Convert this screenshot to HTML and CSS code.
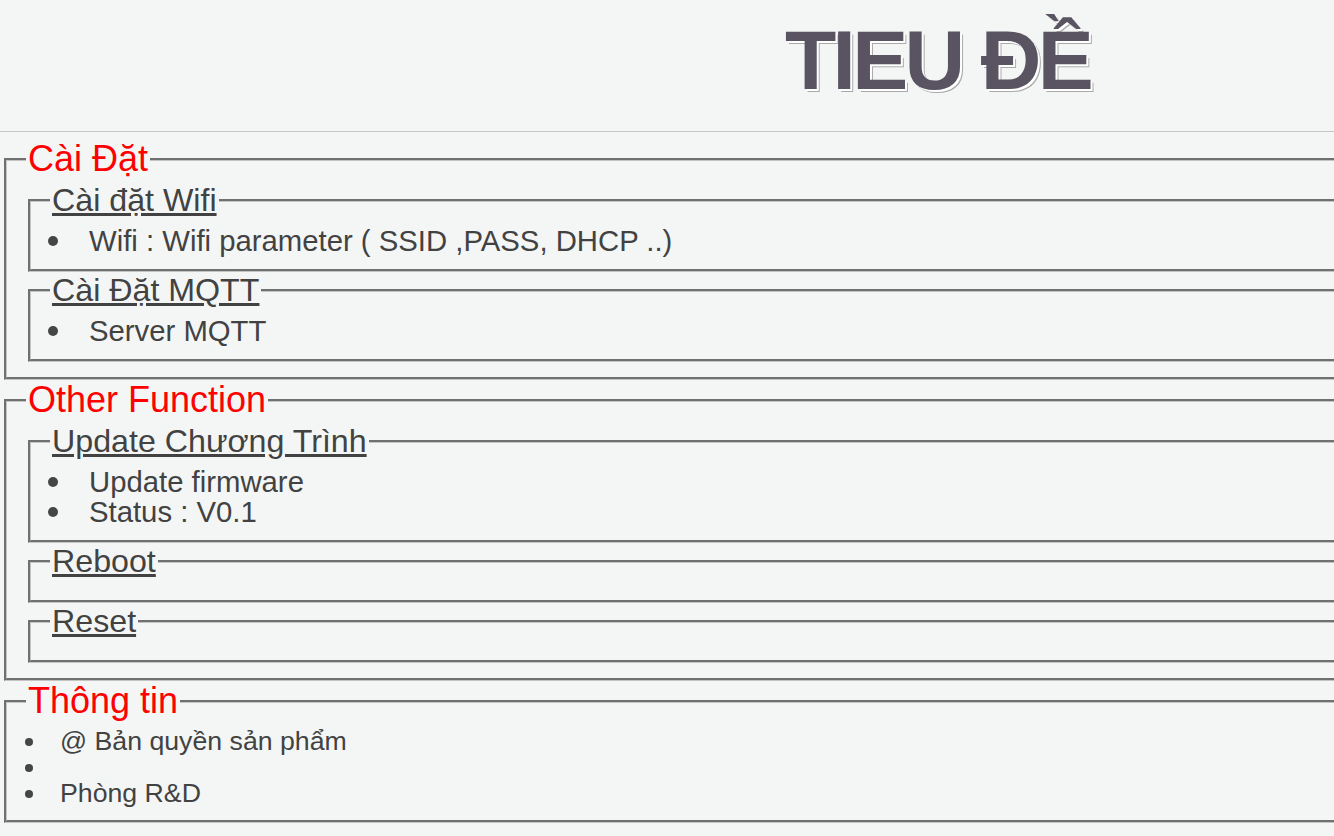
FILE: index.html
```html
<!DOCTYPE html>
<html lang="vi">
<head>
<meta charset="utf-8">
<title>TIEU ĐỀ</title>
<link rel="stylesheet" href="styles.css">
</head>
<body>
<div class="page">
  <h1 class="title">TIEU ĐỀ</h1>
  <div class="rule"></div>

  <fieldset class="group">
    <legend class="group-title">Cài Đặt</legend>
    <fieldset class="section">
      <legend class="section-title">Cài đặt Wifi</legend>
      <ul class="list">
        <li>Wifi : Wifi parameter ( SSID ,PASS, DHCP ..)</li>
      </ul>
    </fieldset>
    <fieldset class="section">
      <legend class="section-title">Cài Đặt MQTT</legend>
      <ul class="list">
        <li>Server MQTT</li>
      </ul>
    </fieldset>
  </fieldset>

  <fieldset class="group">
    <legend class="group-title">Other Function</legend>
    <fieldset class="section">
      <legend class="section-title">Update Chương Trình</legend>
      <ul class="list">
        <li>Update firmware</li>
        <li>Status : V0.1</li>
      </ul>
    </fieldset>
    <fieldset class="section empty">
      <legend class="section-title">Reboot</legend>
    </fieldset>
    <fieldset class="section empty">
      <legend class="section-title">Reset</legend>
    </fieldset>
  </fieldset>

  <fieldset class="group info">
    <legend class="group-title">Thông tin</legend>
    <ul class="info-list">
      <li>@ Bản quyền sản phẩm</li>
      <li></li>
      <li>Phòng R&amp;D</li>
    </ul>
  </fieldset>
</div>
</body>
</html>
```

FILE: styles.css
```css
html {
  overflow: hidden;
  background: #f4f6f6;
}

body {
  margin: 0;
  background: #f4f6f6;
  font-family: "Liberation Sans", Arial, sans-serif;
  color: #424242;
}

.page {
  width: 1875px;
}

.title {
  margin: 0;
  padding-top: 18px;
  font-size: 84px;
  line-height: 84px;
  font-weight: bold;
  text-align: center;
  letter-spacing: -3.8px;
  color: #5a5462;
  text-shadow: 2px 2px 0 #ffffff, 3px 3px 0 #a9a9a9;
}

.rule {
  margin-top: 29px;
  border-top: 1px solid #c6c6c6;
}

.group {
  margin: 0 4px;
  border: 3px groove #c4c4c4;
  padding: 3px 20px 15px 19px;
  min-width: 0;
}

.group:first-of-type {
  margin-top: 7px;
}

.group-title {
  padding: 0 2px;
  font-size: 36px;
  line-height: 40px;
  color: #ff0000;
}

.section {
  margin: 0 2px;
  border: 3px groove #c4c4c4;
  padding: 8px 20px 13px 19px;
  min-width: 0;
}

.section-title {
  padding: 0 2px;
  font-size: 32.2px;
  line-height: 36px;
  color: #424242;
  text-decoration: underline;
}

.list {
  margin: 0;
  padding: 0;
  list-style: none;
  font-size: 29.3px;
  line-height: 30px;
}

.list li {
  display: flex;
  min-height: 30px;
}

.list li::before {
  content: "";
  flex: none;
  width: 10px;
  height: 10px;
  border-radius: 50%;
  background: #454545;
  margin: 10px 31px 0 -2px;
}

.info {
  padding-bottom: 14px;
}

.info-list {
  margin: 4px 0 0;
  padding: 0;
  list-style: none;
  font-size: 26.7px;
  line-height: 26px;
}

.info-list li {
  display: flex;
  min-height: 26px;
}

.info-list li::before {
  content: "";
  flex: none;
  width: 8px;
  height: 8px;
  border-radius: 50%;
  background: #454545;
  margin: 10px 27px 0 -1px;
}
```
